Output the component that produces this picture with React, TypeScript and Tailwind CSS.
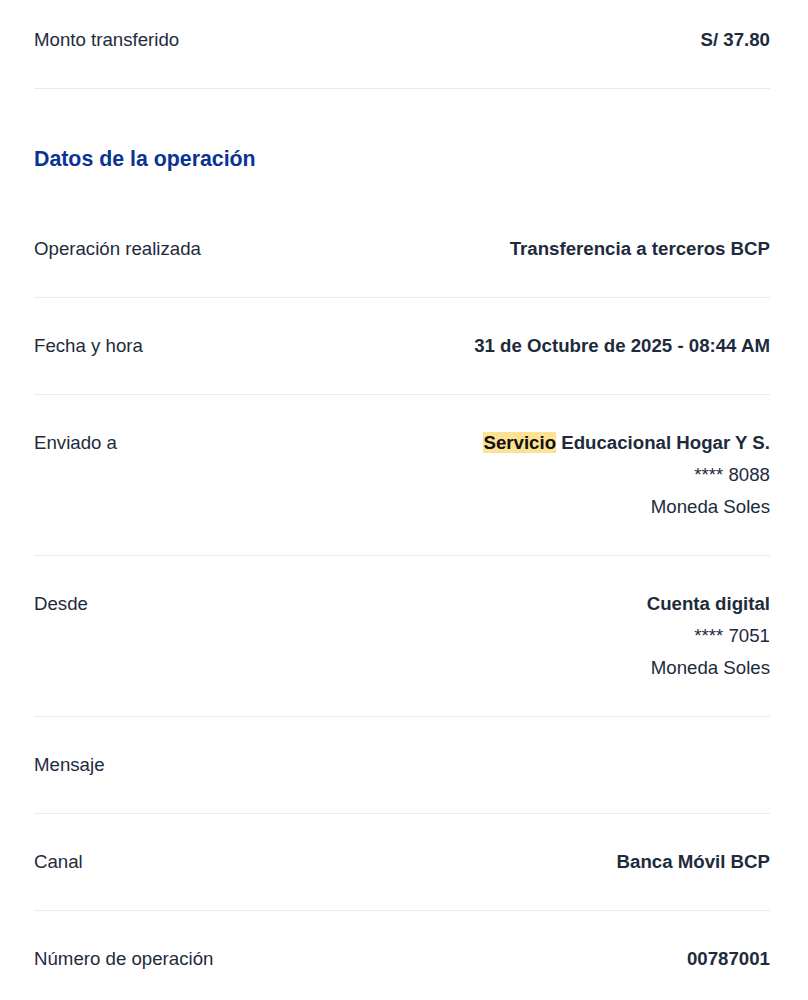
import React from 'react';

type Row = {
    label: string;
    lines?: React.ReactNode[];
};

const ROWS: Row[] = [
    { label: 'Operación realizada', lines: [<b key="a">Transferencia a terceros BCP</b>] },
    { label: 'Fecha y hora', lines: [<b key="a">31 de Octubre de 2025 - 08:44 AM</b>] },
    {
        label: 'Enviado a',
        lines: [
            <b key="a">
                <mark className="bg-[#fde293] text-[#111111]">Servicio</mark> Educacional Hogar Y S.
            </b>,
            '**** 8088',
            'Moneda Soles',
        ],
    },
    { label: 'Desde', lines: [<b key="a">Cuenta digital</b>, '**** 7051', 'Moneda Soles'] },
    { label: 'Mensaje' },
    { label: 'Canal', lines: [<b key="a">Banca Móvil BCP</b>] },
    { label: 'Número de operación', lines: [<b key="a">00787001</b>] },
];

const DetailRow = ({ row, last }: { row: Row; last?: boolean }) => (
    <div className={`flex justify-between gap-6 py-8 ${last ? '' : 'border-b border-[#e8ecf1]'}`}>
        <span>{row.label}</span>
        <div className="flex flex-col items-end text-right">
            {(row.lines ?? []).map((line, i) => (
                <span key={i}>{line}</span>
            ))}
        </div>
    </div>
);

export default function App() {
    return (
        <div className="min-h-screen bg-white pl-[34px] pr-[38px] text-[18.67px] leading-[32px] text-[#1e2b3c] font-['Liberation_Sans',Arial,sans-serif]">
            {/* Monto */}
            <div className="flex justify-between pt-6 pb-8 border-b border-[#e8ecf1]">
                <span>Monto transferido</span>
                <b>S/ 37.80</b>
            </div>

            <h2 className="pt-[56px] pb-[28px] text-[21.33px] leading-[28px] font-bold text-[#0a3396]">
                Datos de la operación
            </h2>

            {ROWS.map((row, i) => (
                <DetailRow key={row.label} row={row} last={i === ROWS.length - 1} />
            ))}
        </div>
    );
}
